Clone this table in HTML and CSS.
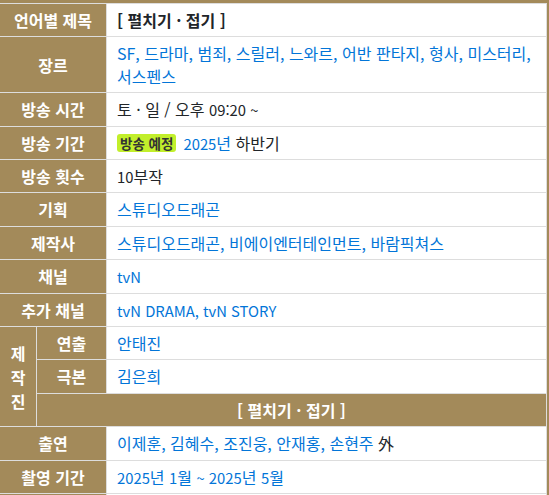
FILE: index.html
```html
<!DOCTYPE html>
<html lang="ko">
<head>
<meta charset="utf-8">
<link rel="stylesheet" href="styles.css">
</head>
<body>
<div class="wrap">
  <div class="info">
    <div class="th span2">언어별 제목</div>
    <div class="td"><b>[ 펼치기 · 접기 ]</b></div>

    <div class="th span2">장르</div>
    <div class="td"><span class="lnk">SF, 드라마, 범죄, 스릴러, 느와르, 어반 판타지, 형사, 미스터리, 서스펜스</span></div>

    <div class="th span2">방송 시간</div>
    <div class="td">토 · 일 / 오후 <span class="en">09:20 ~</span></div>

    <div class="th span2">방송 기간</div>
    <div class="td"><span class="badge">방송 예정</span><span class="lnk"><span class="en">2025</span>년</span> 하반기</div>

    <div class="th span2">방송 횟수</div>
    <div class="td"><span class="en">10</span>부작</div>

    <div class="th span2">기획</div>
    <div class="td"><span class="lnk">스튜디오드래곤</span></div>

    <div class="th span2">제작사</div>
    <div class="td"><span class="lnk">스튜디오드래곤, 비에이엔터테인먼트, 바람픽쳐스</span></div>

    <div class="th span2">채널</div>
    <div class="td"><span class="lnk en">tvN</span></div>

    <div class="th span2">추가 채널</div>
    <div class="td"><span class="lnk en">tvN DRAMA, tvN STORY</span></div>

    <div class="th vert">제<br>작<br>진</div>
    <div class="th">연출</div>
    <div class="td"><span class="lnk">안태진</span></div>
    <div class="th">극본</div>
    <div class="td"><span class="lnk">김은희</span></div>
    <div class="th fold">[ 펼치기 · 접기 ]</div>

    <div class="th span2">출연</div>
    <div class="td"><span class="lnk">이제훈, 김혜수, 조진웅, 안재홍, 손현주</span> 外</div>

    <div class="th span2">촬영 기간</div>
    <div class="td"><span class="lnk"><span class="en">2025</span>년 <span class="en">1</span>월 <span class="en">~ 2025</span>년 <span class="en">5</span>월</span></div>

    <div class="th span2">&nbsp;</div>
    <div class="td">&nbsp;</div>
  </div>
</div>
</body>
</html>
```

FILE: styles.css
```css
html, body {
  margin: 0;
  padding: 0;
  background: #fff;
}

body {
  font-family: "Noto Sans CJK KR", "Noto Sans", sans-serif;
  font-size: 16px;
  color: #212529;
}

.wrap {
  width: 547px;
  border-top: 3px solid #a38a5a;
  border-right: 2px solid #a38a5a;
}

.info {
  display: grid;
  grid-template-columns: 37px 70px 440px;
  border-top: 1px solid #ddd;
}

.th, .td {
  box-sizing: border-box;
  border-right: 1px solid #ddd;
  border-bottom: 1px solid #ddd;
  padding: 5px 10px;
  line-height: 22.4px;
}

.th {
  display: flex;
  align-items: center;
  justify-content: center;
  background: #a38a5a;
  color: #fff;
  font-weight: bold;
  text-align: center;
  padding: 5px 2px;
}

.span2 {
  grid-column: 1 / span 2;
}

.vert {
  grid-row: span 3;
  line-height: 24px;
}

.fold {
  grid-column: 2 / span 2;
}

.td {
  word-break: keep-all;
}

.en {
  font-size: 14.8px;
  line-height: 1;
}

.lnk {
  color: #0275d8;
}

.badge {
  display: inline-block;
  vertical-align: 1px;
  background: #c2ef2b;
  color: #333;
  font-size: 13.5px;
  font-weight: bold;
  line-height: 18px;
  padding: 0 3px;
  border-radius: 3px;
  margin-right: 7px;
}
```
